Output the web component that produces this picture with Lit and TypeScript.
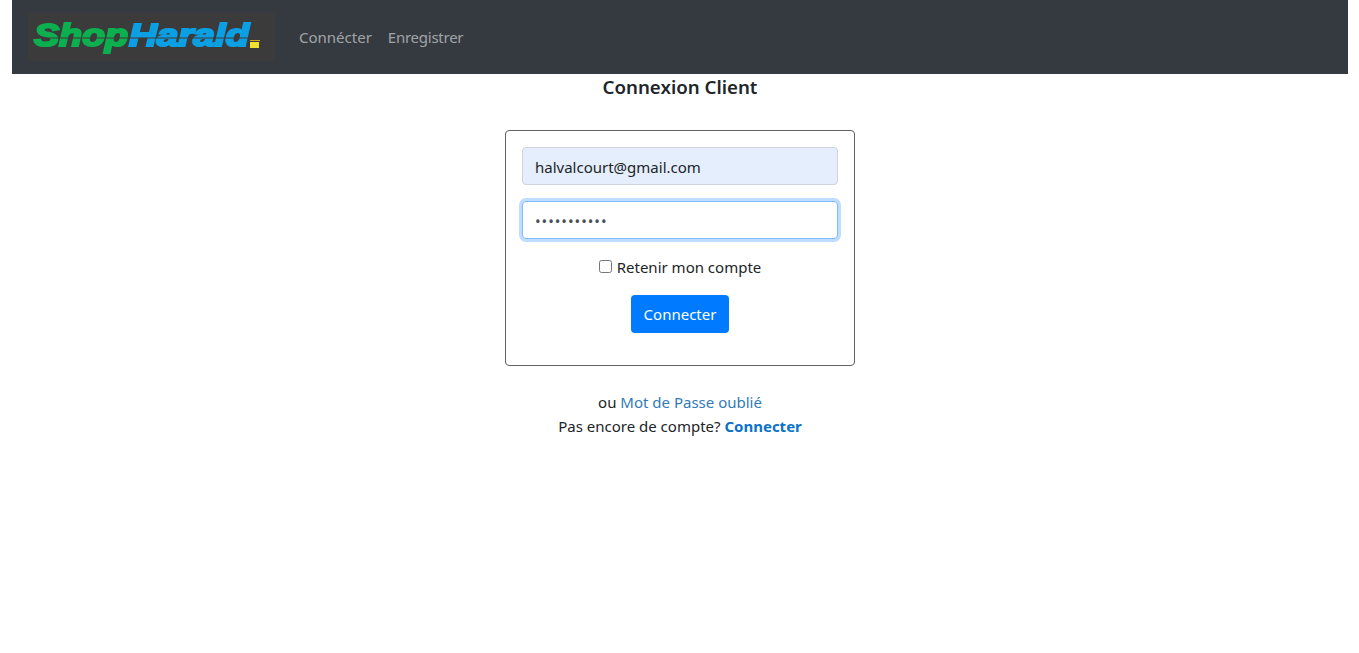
import { LitElement, html, css } from 'lit';
import { customElement } from 'lit/decorators.js';

@customElement('app-root')
export class AppRoot extends LitElement {
  static styles = css`
    :host {
      display: block;
      min-height: 653px;
      background: #fff;
      color: #212529;
      font-family: "Noto Sans", "Open Sans", sans-serif;
      font-size: 15px;
      line-height: 24px;
    }

    .page {
      width: 1336px;
      margin-left: 12px;
    }

    .navbar {
      display: flex;
      align-items: center;
      height: 74px;
      padding-left: 16px;
      background: #343a40;
      box-sizing: border-box;
    }

    .brand {
      display: flex;
      align-items: center;
      width: 247px;
      height: 48px;
      padding-left: 5px;
      box-sizing: border-box;
      background: #3c3b3b;
      margin-right: 16px;
    }

    .brand svg {
      filter: blur(0.4px);
    }

    .nav-link {
      padding: 0 8px;
      color: rgba(255, 255, 255, 0.55);
      text-decoration: none;
    }

    .nav-link.tight {
      letter-spacing: -0.25px;
    }

    .title {
      margin: 0;
      text-align: center;
      font-size: 18.7px;
      font-weight: 600;
      line-height: 26px;
    }

    .card {
      width: 350px;
      height: 236px;
      margin: 30px auto 0;
      padding: 16px;
      box-sizing: border-box;
      border: 1px solid #5f6368;
      border-radius: 4px;
      display: flex;
      flex-direction: column;
      align-items: center;
    }

    .field {
      width: 100%;
      height: 38px;
      padding: 1px 12px 0;
      box-sizing: border-box;
      border: 1px solid #ced4da;
      border-radius: 4px;
      font: inherit;
      color: #212529;
      outline: none;
    }

    .field.filled {
      background: #e4eefc;
    }

    .field.focused {
      margin-top: 16px;
      border-color: #80bdff;
      box-shadow: 0 0 0 3px rgba(0, 123, 255, 0.25);
      color: #495057;
      letter-spacing: 0.95px;
    }

    .remember {
      display: flex;
      align-items: center;
      gap: 5px;
      margin-top: 16px;
    }

    .remember input {
      width: 13px;
      height: 13px;
      margin: 0 0 2px;
    }

    .btn {
      width: 98px;
      height: 38px;
      margin-top: 16px;
      padding: 0;
      border: none;
      border-radius: 4px;
      background: #007bff;
      color: #fff;
      font: inherit;
    }

    .links {
      margin-top: 24px;
      text-align: center;
    }

    .links a {
      color: #337ab7;
      text-decoration: none;
    }

    .links a.strong {
      color: #0a72c9;
      font-weight: 700;
    }
  `;

  private logo() {
    return html`
      <svg width="240" height="48" viewBox="0 0 240 48" aria-label="ShopHarald">
        <g font-family="Liberation Sans, sans-serif" font-size="32" font-weight="700" font-style="italic"
          stroke-width="2.2">
          <text x="1" y="33" textLength="94" lengthAdjust="spacingAndGlyphs" fill="#0cb04f" stroke="#0cb04f">Shop</text>
          <text x="96" y="33" textLength="120" lengthAdjust="spacingAndGlyphs" fill="#0b9fe3" stroke="#0b9fe3">Harald</text>
        </g>
        <line x1="0" y1="25" x2="226" y2="25" stroke="#3c3b3b" stroke-width="1"></line>
        <rect x="217" y="29" width="9" height="6" fill="#f2e22c"></rect>
        <rect x="217" y="27" width="10" height="1" fill="#c9a52a"></rect>
      </svg>
    `;
  }

  render() {
    return html`
      <div class="page">
        <nav class="navbar">
          <a class="brand">${this.logo()}</a>
          <a class="nav-link">Connécter</a>
          <a class="nav-link tight">Enregistrer</a>
        </nav>
        <h1 class="title">Connexion Client</h1>
        <form class="card">
          <input class="field filled" type="email" value="halvalcourt@gmail.com" />
          <input class="field focused" type="password" value="motdepasse1" />
          <label class="remember"><input type="checkbox" />Retenir mon compte</label>
          <button class="btn" type="button">Connecter</button>
        </form>
        <div class="links">
          <div>ou <a href="#">Mot de Passe oublié</a></div>
          <div>Pas encore de compte? <a class="strong" href="#">Connecter</a></div>
        </div>
      </div>
    `;
  }
}
